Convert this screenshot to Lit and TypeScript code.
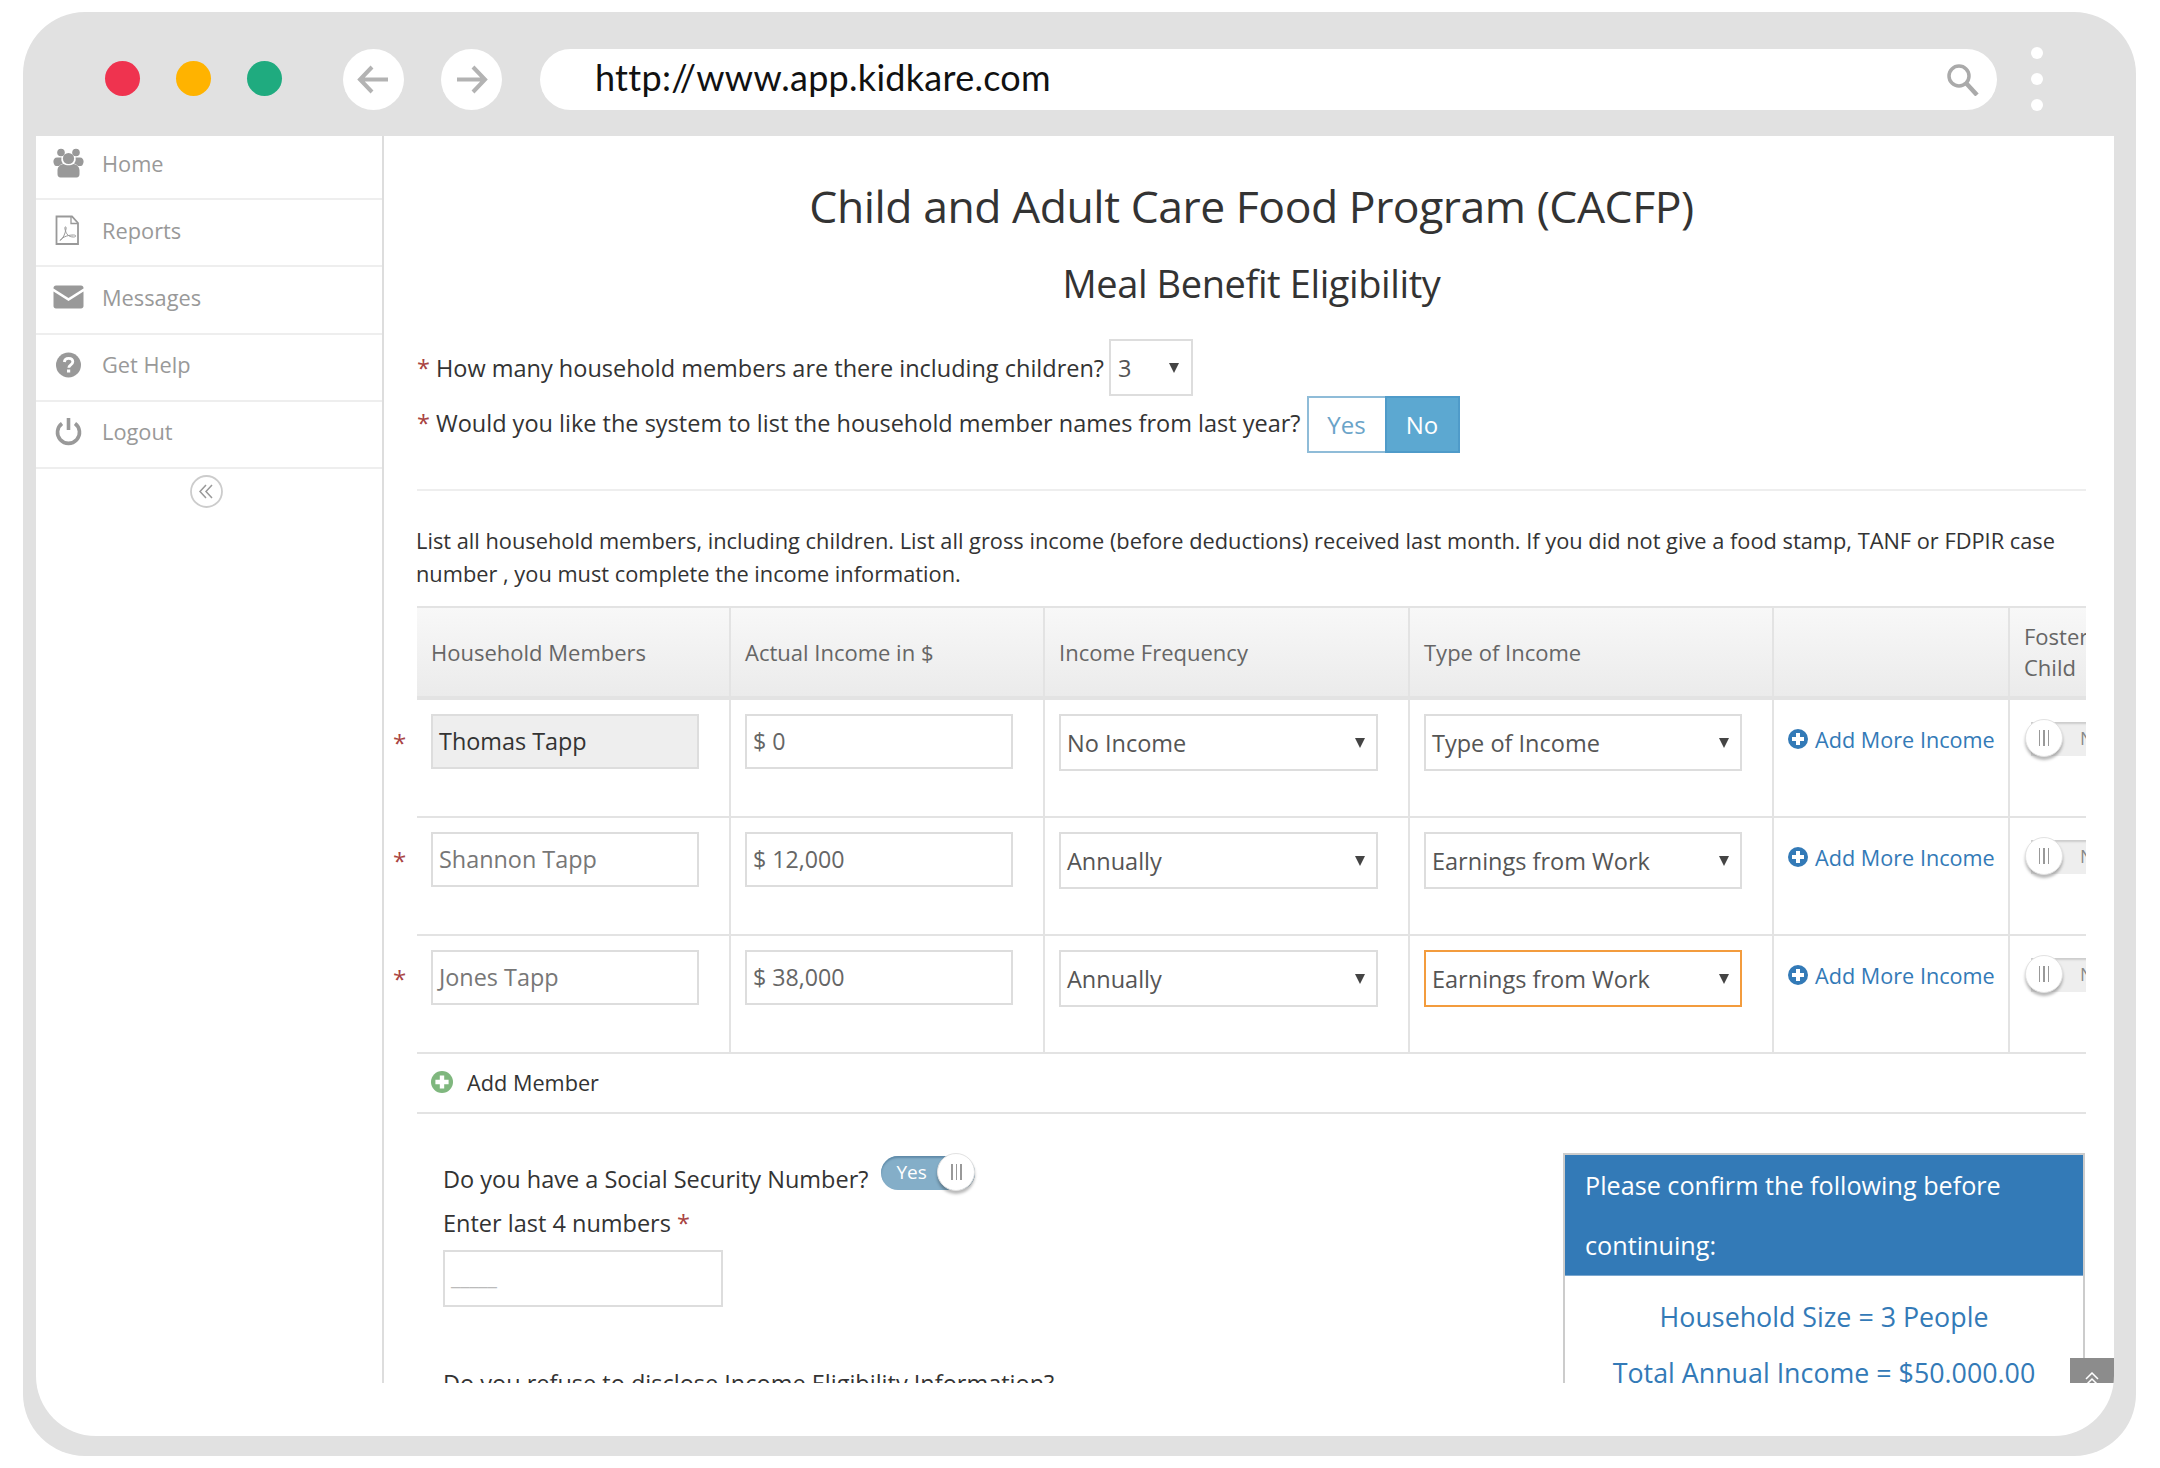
import { LitElement, html, css, svg } from "lit";
import { customElement } from "lit/decorators.js";

const plus = (fill: string) => html`<svg class="plus" viewBox="0 0 20 20"><circle cx="10" cy="10" r="10" fill=${fill}></circle><path d="M8 4h4v4h4v4h-4v4H8v-4H4V8h4z" fill="#fff"></path></svg>`;

const navIcons = [
  svg`<g fill="#999"><circle cx="8" cy="4.500" r="3.800"></circle><circle cx="23" cy="4.500" r="3.800"></circle><circle cx="15.500" cy="10.500" r="5.600"></circle><path d="M1 16c-1.500-3 0-6.500 3-6.500h4.500c-.5 2.500 0 4.500 1.500 6-1.500.5-3 1.500-4 2.500H3c-1 0-1.500-1-2-2z"></path><path d="M30 16c1.500-3 0-6.500-3-6.500h-4.500c.5 2.500 0 4.500-1.500 6 1.500.5 3 1.500 4 2.500h3c1 0 1.500-1 2-2z"></path><path d="M4.500 22.500c0-3.500 2.500-6 6-6.500 2.500 1.800 7.500 1.800 10 0 3.500.5 6 3 6 6.500V26c0 2-1 3.500-3 3.500H7.500c-2 0-3-1.500-3-3.500z"></path></g>`,
  svg`<g fill="none" stroke="#999"><path d="M3.500 1.500h15.500l6 6.500v21H3.500z" stroke-width="1.800"></path><path d="M18 1.500V8.500h7" stroke-width="1.300"></path><path d="M7 25.500c3-2 5-6 6-11.500.5-3-1.500-3-1 0 1 5 3.500 8 8.500 8 3 0 3-2 0-2-4 0-10 1-13.500 5.500z" stroke-width="1"></path></g>`,
  svg`<g fill="#999"><path d="M3 3.500h25c1.500 0 2.500 1 2.500 2.500v.5L15.500 16 .5 6.500V6c0-1.500 1-2.500 2.500-2.500z"></path><path d="M.5 9.500l15 9.500 15-9.500V24c0 1.500-1 2.500-2.500 2.500H3C1.500 26.500.5 25.500.5 24z"></path></g>`,
  svg`<circle cx="15.500" cy="15" r="12.500" fill="#999"></circle><path d="M11.300 12c.3-2.600 2-3.700 4.300-3.700 2.500 0 4.200 1.400 4.200 3.500 0 3.200-4 3-4 6" fill="none" stroke="#fff" stroke-width="2.800"></path><rect x="14" y="19.500" width="3.200" height="3" fill="#fff"></rect>`,
  svg`<path d="M9 6.500a11 11 0 1 0 13 0" fill="none" stroke="#999" stroke-width="3.600"></path><path d="M15.500 1v12" stroke="#999" stroke-width="3.600" fill="none"></path>`,
];

@customElement("app-root")
export class AppRoot extends LitElement {
  static styles = css`
    :host { display: block; font-family: "Open Sans", sans-serif; color: #333; background: #fff; height: 1468px; overflow: hidden; }
    * { box-sizing: border-box; }
    .frame { margin: 12px 0 0 23px; width: 2113px; height: 1444px; background: #e1e1e1; border-radius: 62px; padding: 0 22px 20px 13px; display: flex; flex-direction: column; }
    .toolbar { flex: none; height: 124px; display: flex; align-items: flex-start; padding: 37px 0 0 69px; }
    .dot { width: 35px; height: 35px; border-radius: 50%; margin: 12px 36px 0 0; }
    .nav { width: 61px; height: 61px; border-radius: 50%; background: #fff; display: flex; align-items: center; justify-content: center; margin-right: 37px; }
    .nav svg { width: 33px; height: 29px; }
    .nav.first { margin-left: 25px; }
    .url { width: 1457px; height: 61px; border-radius: 31px; background: #fff; display: flex; align-items: center; justify-content: space-between; padding: 0 18px 0 55px; font-family: "Lato", sans-serif; font-size: 36px; letter-spacing: .28px; color: #111; margin-left: 1px; }
    .url span { margin-top: -6px; }
    .url svg { width: 33px; height: 33px; }
    .more { display: flex; flex-direction: column; gap: 14px; margin: -2px 0 0 34px; }
    .more i { display: block; width: 12px; height: 12px; border-radius: 50%; background: #fff; }
    .window { flex: 1; background: #fff; border-radius: 0 0 60px 60px; overflow: hidden; }
    .view { position: relative; height: 1247px; display: flex; overflow: hidden; }
    .side { flex: none; width: 348px; border-right: 2px solid #ddd; }
    .item { height: 67.200px; border-bottom: 2px solid #eee; display: flex; align-items: center; padding: 0 0 5px 17px; font-size: 21.800px; color: #999; }
    .item:first-child { margin-top: -3px; }
    .item svg { width: 31px; height: 30px; margin-right: 18px; flex: none; }
    .collapse { display: block; width: 33px; height: 33px; margin: 6px 0 0 154px; }
    main { flex: 1; min-width: 0; padding: 39px 28px 0 33px; overflow: hidden; }
    h1 { margin: 0 0 16px; font-size: 44.500px; letter-spacing: -.46px; line-height: 62px; font-weight: 400; text-align: center; color: #333; }
    h2 { margin: 0 0 26px; font-size: 38px; letter-spacing: -.4px; line-height: 60px; font-weight: 400; text-align: center; color: #333; }
    .q { height: 57px; display: flex; align-items: center; font-size: 23.500px; color: #333; white-space: nowrap; }
    .up { margin-top: -3px; }
    .req { color: #a94442; }
    .q .req { margin-right: 6px; }
    .mini { width: 84px; height: 57px; border: 2px solid #ddd; margin-left: 5px; display: flex; align-items: center; justify-content: space-between; padding: 0 12px 0 7px; color: #555; }
    .tri { flex: none; width: 0; height: 0; border-left: 5px solid transparent; border-right: 5px solid transparent; border-top: 10px solid #444; }
    .seg { display: flex; height: 57px; margin-left: 6px; font-size: 24px; }
    .seg span { display: flex; align-items: center; justify-content: center; }
    .seg .y { width: 78px; border: 2px solid #8fbcd8; border-right: 0; color: #6aa3c8; }
    .seg .n { width: 75px; background: #5ca8d1; border: 2px solid #4f9bc9; color: #fff; }
    hr { margin: 36px 0 0; border: 0; border-top: 2px solid #eee; }
    p { margin: 33px 0 16px -1px; font-size: 21.800px; line-height: 33px; color: #333; }
    .wrap { margin-left: -33px; overflow: hidden; }
    table { table-layout: fixed; width: 1756px; border-collapse: separate; border-spacing: 0; }
    th { height: 94px; background: linear-gradient(#f8f8f8, #ebebeb); border-top: 2px solid #e3e3e3; border-bottom: 4px solid #e3e3e3; border-right: 2px solid #e3e3e3; padding: 0 14px; font-weight: 400; font-size: 22px; line-height: 31px; color: #666; text-align: left; }
    th.gap { background: none; border: 0; }
    td { height: 118px; vertical-align: top; border-bottom: 2px solid #e3e3e3; border-right: 2px solid #e3e3e3; padding: 14px 14px 0; }
    td.gap { border: 0; padding: 28px 0 0 9px; font-size: 24px; line-height: 30px; color: #a94442; }
    .input { width: 268px; height: 55px; border: 2px solid #ddd; display: flex; align-items: center; padding: 0 6px 2px; font-size: 23.400px; color: #777; }
    .input.ro { background: #eee; color: #333; }
    .input.money { color: #666; font-size: 23.200px; }
    .select { width: 319px; height: 57px; border: 2px solid #ddd; display: flex; align-items: center; justify-content: space-between; padding: 0 11px 0 6px; font-size: 23.500px; color: #555; }
    .select.narrow { width: 318px; }
    .select.focus { border-color: #f39c3d; }
    .add { display: flex; align-items: center; gap: 7px; height: 50px; font-size: 21.650px; color: #337ab7; white-space: nowrap; }
    .plus { width: 20px; height: 20px; flex: none; }
    .sw { position: relative; display: block; width: 110px; height: 38px; }
    .sw .track { position: absolute; left: 6px; top: 3px; right: 0; height: 34px; background: #eee; box-shadow: inset 0 2px 2px #ccc; font-size: 18px; color: #888; line-height: 32px; padding-left: 49px; }
    .knob { position: absolute; left: 0; top: 0; width: 38px; height: 38px; border-radius: 50%; background: #fff; border: 1px solid #e2e2e2; box-shadow: 0 3px 3px rgba(0,0,0,.28); display: flex; align-items: center; justify-content: center; gap: 3px; }
    .knob i { display: block; width: 1.500px; height: 16px; background: #999; }
    td.sw-cell { padding: 19px 0 0 15px; }
    .addm { height: 60px; border-bottom: 2px solid #e3e3e3; display: flex; align-items: center; padding: 0 0 2px 14px; font-size: 21.700px; color: #333; gap: 14px; }
    .addm .plus { width: 22px; height: 22px; }
    .bottom { display: flex; margin-top: 39px; }
    .left { flex: 1; padding-left: 26px; font-size: 23.500px; color: #333; }
    .ssn { height: 52px; margin-bottom: 2px; display: flex; align-items: center; gap: 13px; }
    .ssn-sw { position: relative; align-self: flex-start; width: 94px; height: 38px; }
    .ssn-sw .track { position: absolute; left: 0; right: 0; top: 3px; height: 34px; border-radius: 17px; background: #84aec8; box-shadow: inset 0 2px 2px #5f8aa8; color: #fff; font-size: 19px; line-height: 32px; padding-left: 15px; }
    .ssn-sw .knob { left: 56px; }
    .lbl { height: 33px; line-height: 33px; }
    .input4 { width: 280px; height: 57px; border: 2px solid #ddd; margin-top: 10px; padding: 0 6px; font-size: 21px; line-height: 50px; color: #bbb; }
    .refuse { margin-top: 60px; line-height: 33px; white-space: nowrap; }
    .panel { flex: none; width: 522px; margin-right: 1px; border: 2px solid #ccc; height: 400px; }
    .panel header { background: #337ab7; color: #fff; padding: 0 20px; font-size: 25.200px; line-height: 60px; height: 121px; border-bottom: 1px solid #7ba7cf; }
    .panel div { padding-top: 13px; text-align: center; color: #337ab7; font-size: 26.800px; line-height: 56px; }
    .top { position: absolute; right: 0; bottom: 0; width: 44px; height: 25px; background: #8c8c8c; overflow: hidden; display: flex; justify-content: center; padding-top: 14px; }
    .top svg { width: 14px; height: 20px; flex: none; }
  `;

  private row(name: string, ro: boolean, amount: string, freq: string, type: string, focus = false) {
    return html`<tr>
      <td class="gap">*</td>
      <td><div class="input ${ro ? "ro" : ""}">${name}</div></td>
      <td><div class="input money">${amount}</div></td>
      <td><div class="select"><span>${freq}</span><i class="tri"></i></div></td>
      <td><div class="select narrow ${focus ? "focus" : ""}"><span>${type}</span><i class="tri"></i></div></td>
      <td><div class="add">${plus("#337ab7")}<span>Add More Income</span></div></td>
      <td class="sw-cell"><span class="sw"><span class="track">No</span><span class="knob"><i></i><i></i><i></i></span></span></td>
    </tr>`;
  }

  render() {
    const items = ["Home", "Reports", "Messages", "Get Help", "Logout"];
    return html`<div class="frame">
      <div class="toolbar">
        <span class="dot" style="background:#ef334f"></span>
        <span class="dot" style="background:#ffb300"></span>
        <span class="dot" style="background:#1fab7f"></span>
        <span class="nav first"><svg viewBox="0 0 33 29"><path d="M15 2L3 14.500 15 27M3 14.500h28" fill="none" stroke="#b3b3b3" stroke-width="4"></path></svg></span>
        <span class="nav"><svg viewBox="0 0 33 29"><path d="M18 2l12 12.500L18 27M30 14.500H2" fill="none" stroke="#b3b3b3" stroke-width="4"></path></svg></span>
        <div class="url"><span>http://www.app.kidkare.com</span><svg viewBox="0 0 33 33"><circle cx="13" cy="13" r="10" fill="none" stroke="#aaa" stroke-width="3.500"></circle><path d="M20 20l11 12" stroke="#aaa" stroke-width="4.500" fill="none"></path></svg></div>
        <div class="more"><i></i><i></i><i></i></div>
      </div>
      <div class="window"><div class="view">
        <aside class="side">
          ${items.map((t, i) => html`<div class="item"><svg viewBox="0 0 31 30">${navIcons[i]}</svg><span>${t}</span></div>`)}
          <svg class="collapse" viewBox="0 0 33 33"><circle cx="16.500" cy="16.500" r="15.500" fill="none" stroke="#ccc" stroke-width="1.800"></circle><path d="M16 10l-6 6.500 6 6.500M22 10l-6 6.500 6 6.500" fill="none" stroke="#999" stroke-width="1.500"></path></svg>
        </aside>
        <main>
          <h1>Child and Adult Care Food Program (CACFP)</h1>
          <h2>Meal Benefit Eligibility</h2>
          <div class="q"><span class="req">*</span>How many household members are there including children?<span class="mini"><span>3</span><i class="tri"></i></span></div>
          <div class="q"><span class="req up">*</span><span class="up">Would you like the system to list the household member names from last year?</span><span class="seg"><span class="y">Yes</span><span class="n">No</span></span></div>
          <hr />
          <p>List all household members, including children. List all gross income (before deductions) received last month. If you did not give a food stamp, TANF or FDPIR case number , you must complete the income information.</p>
          <div class="wrap"><table>
            <colgroup><col style="width:33px"><col style="width:314px"><col style="width:314px"><col style="width:365px"><col style="width:364px"><col style="width:236px"><col style="width:130px"></colgroup>
            <thead><tr><th class="gap"></th><th>Household Members</th><th>Actual Income in $</th><th>Income Frequency</th><th>Type of Income</th><th></th><th>Foster<br />Child</th></tr></thead>
            <tbody>
              ${this.row("Thomas Tapp", true, "$ 0", "No Income", "Type of Income")}
              ${this.row("Shannon Tapp", false, "$ 12,000", "Annually", "Earnings from Work")}
              ${this.row("Jones Tapp", false, "$ 38,000", "Annually", "Earnings from Work", true)}
            </tbody>
          </table></div>
          <div class="addm">${plus("#7fb77e")}<span>Add Member</span></div>
          <div class="bottom">
            <div class="left">
              <div class="ssn"><span>Do you have a Social Security Number?</span><span class="ssn-sw"><span class="track">Yes</span><span class="knob"><i></i><i></i><i></i></span></span></div>
              <div class="lbl">Enter last 4 numbers <span class="req">*</span></div>
              <div class="input4">_____</div>
              <div class="refuse">Do you refuse to disclose Income Eligibility Information?</div>
            </div>
            <section class="panel">
              <header>Please confirm the following before continuing:</header>
              <div>Household Size = 3 People<br />Total Annual Income = $50.000.00</div>
            </section>
          </div>
        </main>
        <span class="top"><svg viewBox="0 0 14 20"><path d="M1 7l6-6 6 6M1 13l6-6 6 6" fill="none" stroke="#fff" stroke-width="1.500"></path></svg></span>
      </div></div>
    </div>`;
  }
}
